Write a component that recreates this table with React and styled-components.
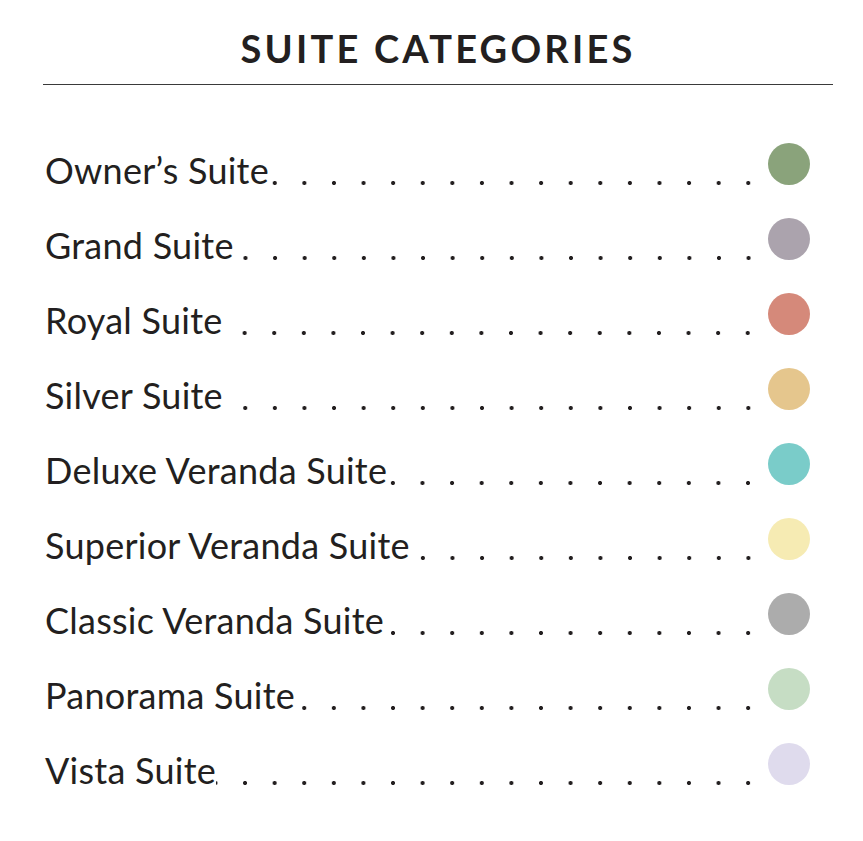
import React from "react";
import styled, { createGlobalStyle } from "styled-components";

const suites = [
  { name: "Owner\u2019s Suite", color: "#8aa37b" },
  { name: "Grand Suite", color: "#aba3ad" },
  { name: "Royal Suite", color: "#d5897a" },
  { name: "Silver Suite", color: "#e5c68d" },
  { name: "Deluxe Veranda Suite", color: "#7accc9" },
  { name: "Superior Veranda Suite", color: "#f6ebb3" },
  { name: "Classic Veranda Suite", color: "#acacac" },
  { name: "Panorama Suite", color: "#c6ddc4" },
  { name: "Vista Suite", color: "#dfdbed" },
];

const Global = createGlobalStyle`
  html, body {
    margin: 0;
    background: #fff;
  }
  body {
    font-family: Lato, "Open Sans", sans-serif;
    color: #231f20;
  }
`;

const Page = styled.div`
  width: 863px;
  padding-top: 26px;
`;

const Header = styled.header`
  margin: 0 30px 0 43px;
  border-bottom: 1px solid #3a3a3a;
  padding-bottom: 14px;
  text-align: center;
`;

const Title = styled.h1`
  margin: 0;
  font-size: 38px;
  font-weight: 700;
  line-height: 44px;
  letter-spacing: 3.2px;
  color: #231f20;
`;

const List = styled.ul`
  list-style: none;
  margin: 0;
  padding: 41px 53px 0 45px;
`;

const Row = styled.li`
  display: flex;
  align-items: center;
  height: 75px;
`;

const Label = styled.span`
  font-size: 36px;
  line-height: 43px;
  padding-top: 14px;
  letter-spacing: 0.25px;
  white-space: nowrap;
`;

const Leader = styled.span`
  flex: 1;
  align-self: stretch;
  margin-right: 5px;
  background-image: radial-gradient(circle, #231f20 1.8px, transparent 2.3px);
  background-size: 29.6px 6px;
  background-repeat: repeat-x;
  background-position: right 0 top 54px;
`;

const Swatch = styled.span`
  width: 42px;
  height: 42px;
  border-radius: 50%;
  background: ${(p) => p.$color};
  flex-shrink: 0;
`;

export default function App() {
  return (
    <Page>
      <Global />
      <Header>
        <Title>SUITE CATEGORIES</Title>
      </Header>
      <List>
        {suites.map((s) => (
          <Row key={s.name}>
            <Label>{s.name}</Label>
            <Leader />
            <Swatch $color={s.color} />
          </Row>
        ))}
      </List>
    </Page>
  );
}
